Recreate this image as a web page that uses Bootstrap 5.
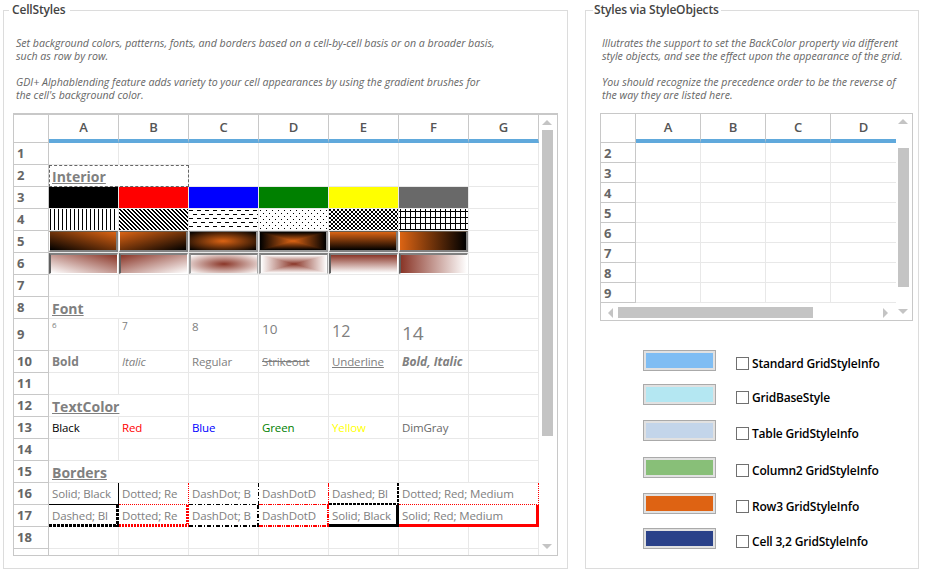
<!DOCTYPE html>
<html lang="en">
<head>
    <meta charset="UTF-8">
    <title>CellStyles</title>
    <link href="https://cdn.jsdelivr.net/npm/bootstrap@5.3.0/dist/css/bootstrap.min.css" rel="stylesheet">
    <style>
        body {
            font-family: "Open Sans", "Liberation Sans", sans-serif;
            background-color: #fff;
            padding: 3px 0 0 3px;
            overflow: hidden;
        }
        .group-box {
            border: 1px solid #dcdcdc;
            height: 566px;
            flex: none;
        }
        .group-left { width: 565px; padding: 0 9px; margin-right: 17px; }
        .group-right { width: 334px; padding: 0 5px 0 14px; }
        .group-box legend {
            float: none;
            width: auto;
            font-size: 12px;
            line-height: 14px;
            font-weight: 600;
            letter-spacing: -.17px;
            color: #444;
            margin: 0;
        }
        .group-left legend { padding: 0 5px 0 3px; margin-left: -4px; }
        .group-right legend { padding: 0 2px 0 1px; margin-left: -7px; }
        .grid-note {
            font-size: 10.6px;
            line-height: 13px;
            font-style: italic;
            color: #666;
            white-space: nowrap;
            margin: 20px 0 11px;
        }
        .group-left .grid-note { padding-left: 3px; }
        .group-right .grid-note { padding-left: 2px; }

        .grid-frame { border: 1px solid #c8c8c8; border-top-width: 2px; overflow: hidden; }
        .group-left .grid-frame { height: 443px; }
        .group-right .grid-frame { height: 208px; border-top-width: 1px; margin-top: 1px; }

        .xl-grid.table { table-layout: fixed; margin: 0; font-size: 11.5px; letter-spacing: -.12px; line-height: 15px; color: #808080; }
        .xl-grid.table > :not(caption) > * > * {
            padding: 0 3px;
            height: 22px;
            border-style: solid;
            border-color: #e8e8e8;
            border-width: 0 1px 1px 0;
            background: none;
            box-shadow: none;
            color: inherit;
            vertical-align: middle;
            white-space: nowrap;
            overflow: hidden;
        }
        .xl-grid-l.table { width: 525px; border-collapse: separate; border-spacing: 0; }
        .xl-grid-r.table { width: 294px; border-collapse: separate; border-spacing: 0; }
        .xl-grid-r.table > :not(caption) > * > * { height: 20px; }
        .xl-grid.table > thead > tr > th {
            height: 28px;
            text-align: center;
            font-size: 13px;
            font-weight: 600;
            letter-spacing: 0;
            color: #555;
            border-color: #c8c8c8;
            border-bottom: 4px solid #60a9dc;
            padding: 1px 0 0;
        }
        .xl-grid-r.table > thead > tr > th { height: 29px; }
        .xl-grid.table > thead > tr > th.corner,
        .xl-grid.table > tbody > tr > th {
            border-color: #c8c8c8;
            border-bottom: 1px solid #c8c8c8;
        }
        .xl-grid.table > tbody > tr > th {
            font-size: 13px;
            font-weight: 700;
            letter-spacing: 0;
            color: #666;
            padding-left: 3px;
        }
        .xl-grid-r.table > tbody > tr > th { padding-top: 2px; }
        .col-rowhead { width: 35px; }
        .xl-grid-l .col-cell { width: 70px; }
        .xl-grid-r .col-cell { width: 65px; }
        .xl-grid.table > :not(caption) > * > .last-col { border-right: 0; }

        .xl-grid.table > tbody > tr > .section-head {
            font-size: 14px;
            font-weight: 700;
            letter-spacing: 0;
            text-decoration: underline;
            vertical-align: bottom;
            padding-bottom: 2px;
        }
        .xl-grid.table > tbody > tr > .focus-cell { outline: 1px dashed #666; outline-offset: -1px; }
        .xl-grid.table > tbody > tr > .fill { padding: 0; }
        .xl-grid.table > tbody > tr > .cell-bold { font-size: 12px; letter-spacing: 0; }
        .hatch { display: block; width: 100%; height: 21px; shape-rendering: crispEdges; }

        .fill-black { --fc: #000; } .fill-red { --fc: #f00; } .fill-blue { --fc: #00f; }
        .fill-green { --fc: #008000; } .fill-yellow { --fc: #ff0; } .fill-gray { --fc: #696969; }
        .xl-grid.table > tbody > tr > .solid { background-color: var(--fc); }

        .grad { height: 21px; border: 1px solid #fff; --g1: #dc6414; --g2: #000; }
        .grad-raised { border-color: #6a5a4a #808080 #808080 #fff; border-width: 1px 2px 2px 1px; }
        .grad-raised.g-c, .grad-raised.g-d { border-color: #777 #999 #999 #aaa; }
        .grad-sunk { border-color: #808080 #fff #fff #606060; border-width: 2px 1px 1px 2px; --g1: #8a3628; --g2: #fff; }
        .grad-sunk.g-c, .grad-sunk.g-d { border-color: #808080 #aaa #eee #999; }
        .g-a { background: linear-gradient(to bottom left, var(--g1), var(--g2)); }
        .g-b { background: linear-gradient(to bottom right, var(--g1), var(--g2)); }
        .g-c { background: radial-gradient(var(--g1), var(--g2)); }
        .g-d {
            background: linear-gradient(to right, var(--g2), var(--g1), var(--g2)), linear-gradient(to bottom, var(--g2), var(--g1), var(--g2));
        }
        .grad-raised.g-d { background-blend-mode: darken; }
        .grad-sunk.g-d { background-blend-mode: lighten; }
        .g-e { background: linear-gradient(to bottom, var(--g1), var(--g2)); }
        .g-f { background: linear-gradient(to right, var(--g1), var(--g2)); }

        .xl-grid.table > tbody > tr > .size-cell { height: 32px; vertical-align: top; line-height: 1.2; letter-spacing: 0; }
        .xl-grid.table > tbody > tr > .size-6 { font-size: 8px; padding-top: 1px; }
        .xl-grid.table > tbody > tr > .size-7 { font-size: 10px; padding-top: 1px; }
        .xl-grid.table > tbody > tr > .size-8 { font-size: 11.5px; padding-top: 1px; }
        .xl-grid.table > tbody > tr > .size-10 { font-size: 13.5px; padding-top: 2px; }
        .xl-grid.table > tbody > tr > .size-12 { font-size: 16px; padding-top: 3px; }
        .xl-grid.table > tbody > tr > .size-14 { font-size: 19px; padding-top: 3px; }
        .xl-grid.table > tbody > tr > .tx-black { color: #000; }
        .xl-grid.table > tbody > tr > .tx-red { color: #f00; }
        .xl-grid.table > tbody > tr > .tx-blue { color: #00f; }
        .xl-grid.table > tbody > tr > .tx-green { color: #008000; }
        .xl-grid.table > tbody > tr > .tx-yellow { color: #ff0; }
        .xl-grid.table > tbody > tr > .tx-dim { color: #696969; }

        .xl-grid.table > tbody > tr > .edge {
            border-width: 0;
            padding-bottom: 2px;
            background:
                linear-gradient(90deg, var(--dash)) left bottom / var(--n) var(--w) repeat-x,
                linear-gradient(180deg, var(--dash)) right top / var(--w) var(--n) repeat-y;
        }
        .xl-grid.table > tbody > tr > .edge-dotted {
            border: dotted #f00;
            border-width: 0 1px 1px 0;
            background: none;
        }
        .e-solid-k { --w: 1px; --n: 2px; --dash: #000 0 2px; }
        .e-solid-k2 { --w: 3px; --n: 2px; --dash: #000 0 2px; }
        .e-solid-r2 { --w: 3px; --n: 2px; --dash: #f00 0 2px; }
        .e-dot-r2 { --w: 3px; --n: 3px; --dash: #f00 0 2px, #fff 2px 3px; }
        .e-dash-k { --w: 2px; --n: 4px; --dash: #000 0 3px, transparent 3px 4px; }
        .e-dash-k2 { --w: 3px; --n: 4px; --dash: #000 0 3px, transparent 3px 4px; }
        .e-dd-k { --w: 1px; --n: 9px; --dash: #000 0 4px, transparent 4px 6px, #000 6px 7px, transparent 7px 9px; }
        .e-dd-k2 { --w: 2px; --n: 9px; --dash: #000 0 4px, transparent 4px 6px, #000 6px 7px, transparent 7px 9px; }
        .e-ddd-r { --w: 1px; --n: 9px; --dash: #f00 0 4px, transparent 4px 5px, #f00 5px 6px, transparent 6px 7px, #f00 7px 8px, transparent 8px 9px; }
        .e-ddd-r2 { --w: 2px; --n: 9px; --dash: #f00 0 4px, transparent 4px 5px, #f00 5px 6px, transparent 6px 7px, #f00 7px 8px, transparent 8px 9px; }

        .vscroll { width: 18px; flex: none; }
        .scroll-thumb { background-color: #c4c4c4; }
        .vscroll .scroll-thumb { width: 11px; margin-left: 3px; }
        .group-left .vscroll .scroll-thumb { height: 306px; margin-top: 5px; }
        .group-right .vscroll .scroll-thumb { height: 139px; margin-top: 24px; margin-left: 2px; }
        .arrow-up, .arrow-down, .arrow-left, .arrow-right { width: 0; height: 0; border-style: solid; border-color: transparent; }
        .arrow-up { border-width: 0 5px 5px; border-bottom-color: #c4c4c4; margin: 5px 0 0 3px; }
        .arrow-down { border-width: 5px 5px 0; border-top-color: #c4c4c4; margin: 0 0 6px 3px; }
        .group-right .arrow-up, .group-right .arrow-down { margin-left: 2px; }
        .arrow-left { border-width: 5px 5px 5px 0; border-right-color: #c4c4c4; }
        .arrow-right { border-width: 5px 0 5px 5px; border-left-color: #c4c4c4; }
        .hscroll { height: 18px; width: 294px; padding: 1px 7px 0; }
        .hscroll .scroll-thumb { width: 195px; height: 11px; margin-left: 5px; }

        .style-list { margin: 29px 0 0 43px; }
        .style-row { height: 21px; }
        .style-row + .style-row { margin-top: 15px; }
        .style-row + .style-row-2 { margin-top: 13px; }
        .style-row + .style-row-4 { margin-top: 16px; }
        .style-row + .style-row-6 { margin-top: 14px; }
        .swatch-box { width: 73px; height: 21px; border: 1px solid #aaa; background-color: #e1e1e1; padding: 2px; flex: none; margin-right: 20px; }
        .swatch-fill { height: 100%; }
        .swatch-standard { background-color: #7fbdf3; }
        .swatch-base { background-color: #b4e7f2; }
        .swatch-table { background-color: #c3d5ea; }
        .swatch-col { background-color: #88bf78; }
        .swatch-row { background-color: #de6313; }
        .swatch-cell { background-color: #2a4189; }
        .style-check { margin-top: 6px; }
        .style-check .form-check-input {
            width: 13px;
            height: 13px;
            margin: 0 3px 0 0;
            border: 1px solid #707070;
            border-radius: 0;
        }
        .style-check label { font-size: 12px; font-weight: 600; letter-spacing: -.19px; color: #000; white-space: nowrap; line-height: 15px; }
    </style>
</head>
<body>
    <svg width="0" height="0" class="position-absolute">
        <defs>
            <pattern id="p-vert" width="4" height="1" patternUnits="userSpaceOnUse"><rect width="4" height="1" fill="#fff"/><rect x="1" width="1" height="1" fill="#000"/></pattern>
            <pattern id="p-diag" width="4" height="4" patternUnits="userSpaceOnUse"><rect width="4" height="4" fill="#fff"/><path d="M0 0h2v1H0zM1 1h2v1H1zM2 2h2v1H2zM3 3h1v1H3zM0 3h1v1H0z" fill="#000"/></pattern>
            <pattern id="p-dash" width="8" height="8" patternUnits="userSpaceOnUse"><rect width="8" height="8" fill="#fff"/><path d="M0 1h4v1H0zM4 5h4v1H4z" fill="#000"/></pattern>
            <pattern id="p-dots" width="6" height="6" patternUnits="userSpaceOnUse"><rect width="6" height="6" fill="#fff"/><path d="M1 1h1v1H1zM4 4h1v1H4z" fill="#000"/></pattern>
            <pattern id="p-check" width="4" height="4" patternUnits="userSpaceOnUse"><rect width="4" height="4" fill="#fff"/><path d="M0 0h2v2H0zM2 2h2v2H2z" fill="#000"/></pattern>
            <pattern id="p-grid" width="5" height="6" patternUnits="userSpaceOnUse"><rect width="5" height="6" fill="#fff"/><path d="M1 0h1v6H1zM0 2h5v1H0z" fill="#000"/></pattern>
        </defs>
    </svg>

    <div class="d-flex">
        <fieldset class="group-box group-left">
            <legend>CellStyles</legend>
            <p class="grid-note">
                Set background colors, patterns, fonts, and borders based on a cell-by-cell basis or on a broader basis,<br>
                such as row by row.<br><br>
                GDI+ Alphablending feature adds variety to your cell appearances by using the gradient brushes for<br>
                the cell's background color.
            </p>
            <div class="grid-frame d-flex">
                <table class="table xl-grid xl-grid-l flex-none">
                    <colgroup>
                        <col class="col-rowhead"><col class="col-cell"><col class="col-cell"><col class="col-cell"><col class="col-cell"><col class="col-cell"><col class="col-cell"><col class="col-cell">
                    </colgroup>
                    <thead>
                        <tr><th class="corner"></th><th>A</th><th>B</th><th>C</th><th>D</th><th>E</th><th>F</th><th>G</th></tr>
                    </thead>
                    <tbody>
                        <tr><th>1</th><td></td><td></td><td></td><td></td><td></td><td></td><td></td></tr>
                        <tr><th>2</th><td colspan="2" class="section-head focus-cell">Interior</td><td></td><td></td><td></td><td></td><td></td></tr>
                        <tr><th>3</th><td class="solid fill-black"></td><td class="solid fill-red"></td><td class="solid fill-blue"></td><td class="solid fill-green"></td><td class="solid fill-yellow"></td><td class="solid fill-gray"></td><td></td></tr>
                        <tr><th>4</th>
                            <td class="fill"><svg class="hatch"><rect width="100%" height="100%" fill="url(#p-vert)"/></svg></td>
                            <td class="fill"><svg class="hatch"><rect width="100%" height="100%" fill="url(#p-diag)"/></svg></td>
                            <td class="fill"><svg class="hatch"><rect width="100%" height="100%" fill="url(#p-dash)"/></svg></td>
                            <td class="fill"><svg class="hatch"><rect width="100%" height="100%" fill="url(#p-dots)"/></svg></td>
                            <td class="fill"><svg class="hatch"><rect width="100%" height="100%" fill="url(#p-check)"/></svg></td>
                            <td class="fill"><svg class="hatch"><rect width="100%" height="100%" fill="url(#p-grid)"/></svg></td>
                            <td></td></tr>
                        <tr><th>5</th>
                            <td class="fill"><div class="grad grad-raised g-a"></div></td>
                            <td class="fill"><div class="grad grad-raised g-b"></div></td>
                            <td class="fill"><div class="grad grad-raised g-c"></div></td>
                            <td class="fill"><div class="grad grad-raised g-d"></div></td>
                            <td class="fill"><div class="grad grad-raised g-e"></div></td>
                            <td class="fill"><div class="grad grad-raised g-f"></div></td>
                            <td></td></tr>
                        <tr><th>6</th>
                            <td class="fill"><div class="grad grad-sunk g-a"></div></td>
                            <td class="fill"><div class="grad grad-sunk g-b"></div></td>
                            <td class="fill"><div class="grad grad-sunk g-c"></div></td>
                            <td class="fill"><div class="grad grad-sunk g-d"></div></td>
                            <td class="fill"><div class="grad grad-sunk g-e"></div></td>
                            <td class="fill"><div class="grad grad-sunk g-f"></div></td>
                            <td></td></tr>
                        <tr><th>7</th><td></td><td></td><td></td><td></td><td></td><td></td><td></td></tr>
                        <tr><th>8</th><td colspan="2" class="section-head">Font</td><td></td><td></td><td></td><td></td><td></td></tr>
                        <tr><th>9</th><td class="size-cell size-6">6</td><td class="size-cell size-7">7</td><td class="size-cell size-8">8</td><td class="size-cell size-10">10</td><td class="size-cell size-12">12</td><td class="size-cell size-14">14</td><td></td></tr>
                        <tr><th>10</th><td class="cell-bold fw-bold">Bold</td><td class="fst-italic">Italic</td><td>Regular</td><td class="text-decoration-line-through">Strikeout</td><td class="text-decoration-underline">Underline</td><td class="cell-bold fw-bold fst-italic">Bold, Italic</td><td></td></tr>
                        <tr><th>11</th><td></td><td></td><td></td><td></td><td></td><td></td><td></td></tr>
                        <tr><th>12</th><td colspan="2" class="section-head">TextColor</td><td></td><td></td><td></td><td></td><td></td></tr>
                        <tr><th>13</th><td class="tx-black">Black</td><td class="tx-red">Red</td><td class="tx-blue">Blue</td><td class="tx-green">Green</td><td class="tx-yellow">Yellow</td><td class="tx-dim">DimGray</td><td></td></tr>
                        <tr><th>14</th><td></td><td></td><td></td><td></td><td></td><td></td><td></td></tr>
                        <tr><th>15</th><td colspan="2" class="section-head">Borders</td><td></td><td></td><td></td><td></td><td></td></tr>
                        <tr><th>16</th><td class="edge e-solid-k">Solid; Black</td><td class="edge-dotted">Dotted; Re</td><td class="edge e-dd-k">DashDot; B</td><td class="edge e-ddd-r">DashDotD</td><td class="edge e-dash-k">Dashed; Bl</td><td colspan="2" class="edge-dotted">Dotted; Red; Medium</td></tr>
                        <tr><th>17</th><td class="edge e-dash-k2">Dashed; Bl</td><td class="edge e-dot-r2">Dotted; Re</td><td class="edge e-dd-k2">DashDot; B</td><td class="edge e-ddd-r2">DashDotD</td><td class="edge e-solid-k2">Solid; Black</td><td colspan="2" class="edge e-solid-r2">Solid; Red; Medium</td></tr>
                        <tr><th>18</th><td></td><td></td><td></td><td></td><td></td><td></td><td></td></tr>
                        <tr><th></th><td></td><td></td><td></td><td></td><td></td><td></td><td></td></tr>
                    </tbody>
                </table>
                <div class="vscroll d-flex flex-column">
                    <div class="arrow-up"></div>
                    <div class="scroll-thumb"></div>
                    <div class="arrow-down mt-auto"></div>
                </div>
            </div>
        </fieldset>

        <fieldset class="group-box group-right">
            <legend>Styles via StyleObjects</legend>
            <p class="grid-note">
                Illutrates the support to set the BackColor property via different<br>
                style objects, and see the effect upon the appearance of the grid.<br><br>
                You should recognize the precedence order to be the reverse of<br>
                the way they are listed here.
            </p>
            <div class="grid-frame d-flex">
                <div>
                    <table class="table xl-grid xl-grid-r">
                        <colgroup>
                            <col class="col-rowhead"><col class="col-cell"><col class="col-cell"><col class="col-cell"><col class="col-cell">
                        </colgroup>
                        <thead>
                            <tr><th class="corner"></th><th>A</th><th>B</th><th>C</th><th class="last-col">D</th></tr>
                        </thead>
                        <tbody>
                            <tr><th>2</th><td></td><td></td><td></td><td class="last-col"></td></tr>
                            <tr><th>3</th><td></td><td></td><td></td><td class="last-col"></td></tr>
                            <tr><th>4</th><td></td><td></td><td></td><td class="last-col"></td></tr>
                            <tr><th>5</th><td></td><td></td><td></td><td class="last-col"></td></tr>
                            <tr><th>6</th><td></td><td></td><td></td><td class="last-col"></td></tr>
                            <tr><th>7</th><td></td><td></td><td></td><td class="last-col"></td></tr>
                            <tr><th>8</th><td></td><td></td><td></td><td class="last-col"></td></tr>
                            <tr><th>9</th><td></td><td></td><td></td><td class="last-col"></td></tr>
                        </tbody>
                    </table>
                    <div class="hscroll d-flex align-items-center">
                        <div class="arrow-left"></div>
                        <div class="scroll-thumb"></div>
                        <div class="arrow-right ms-auto"></div>
                    </div>
                </div>
                <div class="vscroll d-flex flex-column">
                    <div class="arrow-up"></div>
                    <div class="scroll-thumb"></div>
                    <div class="arrow-down mt-auto"></div>
                </div>
            </div>

            <div class="style-list">
                <div class="style-row d-flex align-items-center">
                    <div class="swatch-box"><div class="swatch-fill swatch-standard"></div></div>
                    <div class="style-check d-flex align-items-center"><input class="form-check-input" type="checkbox" id="chk1"><label for="chk1">Standard GridStyleInfo</label></div>
                </div>
                <div class="style-row style-row-2 d-flex align-items-center">
                    <div class="swatch-box"><div class="swatch-fill swatch-base"></div></div>
                    <div class="style-check d-flex align-items-center"><input class="form-check-input" type="checkbox" id="chk2"><label for="chk2">GridBaseStyle</label></div>
                </div>
                <div class="style-row d-flex align-items-center">
                    <div class="swatch-box"><div class="swatch-fill swatch-table"></div></div>
                    <div class="style-check d-flex align-items-center"><input class="form-check-input" type="checkbox" id="chk3"><label for="chk3">Table GridStyleInfo</label></div>
                </div>
                <div class="style-row style-row-4 d-flex align-items-center">
                    <div class="swatch-box"><div class="swatch-fill swatch-col"></div></div>
                    <div class="style-check d-flex align-items-center"><input class="form-check-input" type="checkbox" id="chk4"><label for="chk4">Column2 GridStyleInfo</label></div>
                </div>
                <div class="style-row d-flex align-items-center">
                    <div class="swatch-box"><div class="swatch-fill swatch-row"></div></div>
                    <div class="style-check d-flex align-items-center"><input class="form-check-input" type="checkbox" id="chk5"><label for="chk5">Row3 GridStyleInfo</label></div>
                </div>
                <div class="style-row style-row-6 d-flex align-items-center">
                    <div class="swatch-box"><div class="swatch-fill swatch-cell"></div></div>
                    <div class="style-check d-flex align-items-center"><input class="form-check-input" type="checkbox" id="chk6"><label for="chk6">Cell 3,2 GridStyleInfo</label></div>
                </div>
            </div>
        </fieldset>
    </div>

    <script src="https://cdn.jsdelivr.net/npm/bootstrap@5.3.0/dist/js/bootstrap.bundle.min.js"></script>
</body>
</html>
